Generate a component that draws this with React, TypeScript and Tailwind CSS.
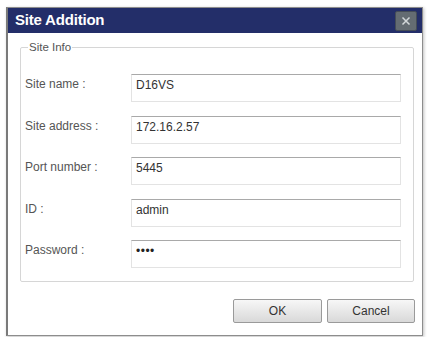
import React from 'react';

interface Field {
  label: string;
  value: string;
  password?: boolean;
}

const fields: Field[] = [
  { label: 'Site name :', value: 'D16VS' },
  { label: 'Site address :', value: '172.16.2.57' },
  { label: 'Port number :', value: '5445' },
  { label: 'ID :', value: 'admin' },
  { label: 'Password :', value: '••••', password: true },
];

const App: React.FC = () => {
  return (
    <div className="w-[429px] h-[337px] bg-white pt-[7px] pl-[6px] font-['Liberation_Sans',Arial,sans-serif]">
      <div className="w-[417px] h-[329px] flex flex-col border border-[#8d8d8d] border-l-2 border-l-[#7a7a7a] bg-white shadow-[1px_1px_3px_rgba(0,0,0,0.25)]">
        {/* Title bar */}
        <div className="h-[25px] flex items-center justify-between bg-[#232e69] pl-[7px] pr-[5px]">
          <span className="text-white font-bold text-[15px] tracking-[-0.2px]">Site Addition</span>
          <div className="w-[22px] h-[20px] flex items-center justify-center bg-[#646c72] border border-[#454d57] rounded-[2px]">
            <svg width="12" height="12" viewBox="0 0 12 12">
              <path d="M2.5 2.5 L9.5 9.5 M9.5 2.5 L2.5 9.5" stroke="#d3d8da" strokeWidth="1.5" />
            </svg>
          </div>
        </div>

        {/* Body */}
        <div className="flex-1 flex flex-col px-[12px] pt-[7px]">
          <fieldset className="border border-[#d6d6d6] rounded-[2px] pl-[4px] pr-[12px] pt-[20px] pb-[13px]">
            <legend className="ml-[3px] px-[1px] text-[11.5px] text-[#555] leading-[14px]">Site Info</legend>
            <div className="flex flex-col gap-[13.5px]">
              {fields.map((f) => (
                <div key={f.label} className="flex items-start h-[28px]">
                  <span className="w-[106px] text-[12px] text-[#555] leading-[14px] pt-[3px]">{f.label}</span>
                  <div className="w-[270px] h-[28px] border border-[#e3e3e3] border-t-[#a9a9a9] pl-[4px] pt-[2px] leading-[14px]">
                    <span
                      className={
                        f.password
                          ? 'text-[12px] text-[#222] tracking-[0.5px] leading-[14px]'
                          : 'text-[12px] text-[#333] leading-[14px]'
                      }
                    >
                      {f.value}
                    </span>
                  </div>
                </div>
              ))}
            </div>
          </fieldset>

          <div className="flex justify-end gap-[5px] mt-[17px] mr-[-5px]">
            <button className="w-[89px] h-[24px] border border-[#9a9a9a] rounded-[2px] bg-gradient-to-b from-[#f7f7f7] to-[#d9d9d9] text-[12px] text-[#333]">
              OK
            </button>
            <button className="w-[88px] h-[24px] border border-[#9a9a9a] rounded-[2px] bg-gradient-to-b from-[#f7f7f7] to-[#d9d9d9] text-[12px] text-[#333]">
              Cancel
            </button>
          </div>
        </div>
      </div>
    </div>
  );
};

export default App;
